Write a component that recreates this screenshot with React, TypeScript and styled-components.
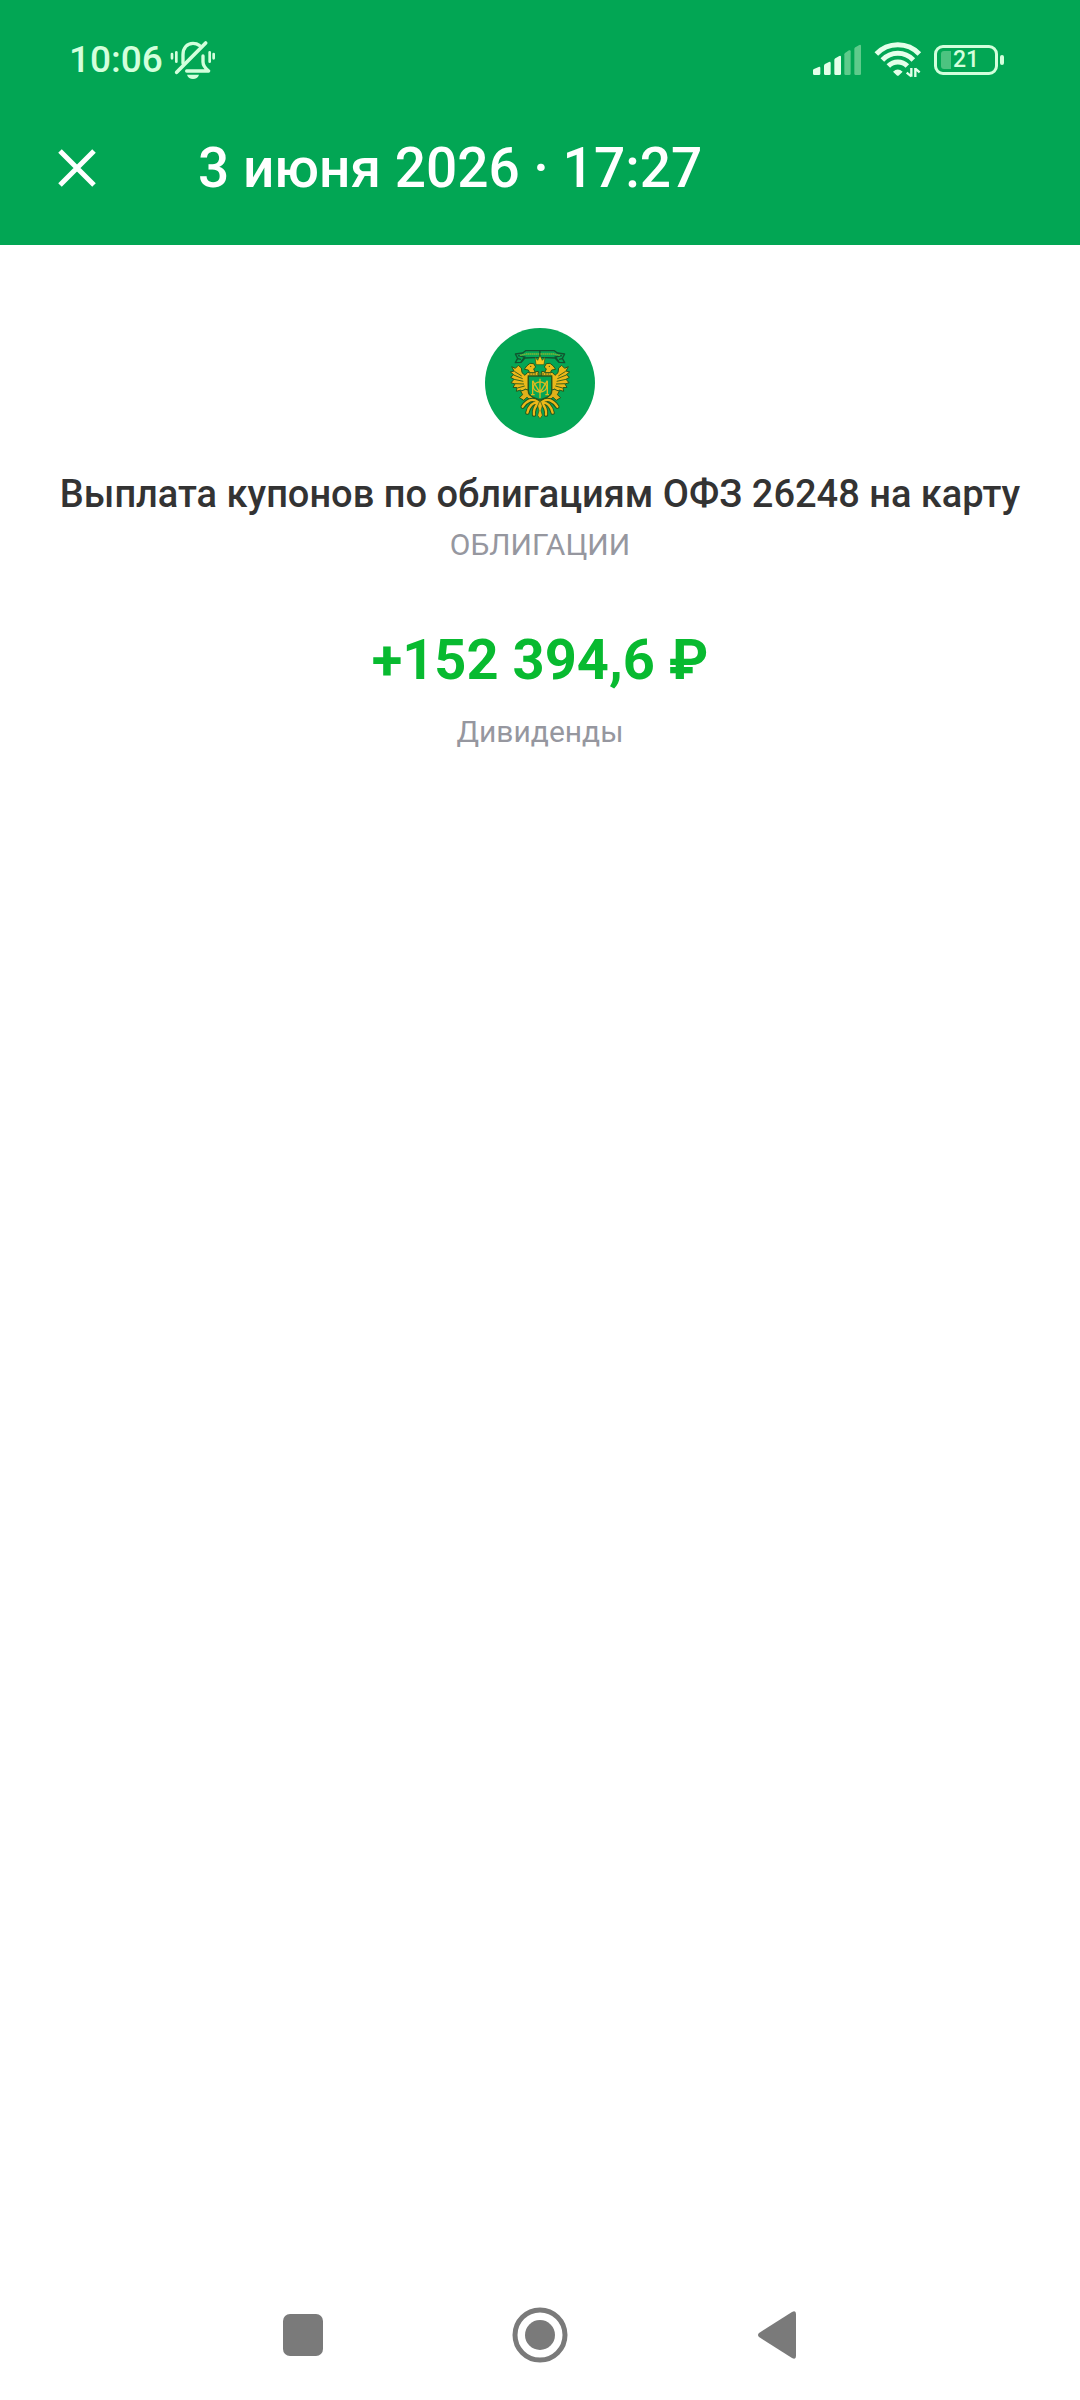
import styled, { createGlobalStyle } from "styled-components";

const BellOffIcon = () => (
  <svg width="46" height="40" viewBox="360 60 138 120" fill="none" aria-hidden="true">
    <g stroke="#d3ffdc" strokeWidth="10" strokeLinecap="round" strokeLinejoin="round">
      <path d="M399 130V104c0-20 12-34 30-34 8 0 14 2 19 6" />
      <path d="M459 108v18c0 12 6 18 17 27H410" />
      <path d="M380 157L467 69" strokeWidth="11" />
      <path d="M366 102v13M379 97v28M479 97v28M491 102v13" strokeWidth="8" />
    </g>
    <path d="M411 164h36c-3 9-9 13-18 13s-15-4-18-13z" fill="#d3ffdc" />
  </svg>
);

const SignalIcon = () => (
  <svg width="50" height="36" viewBox="66 66 150 108" aria-hidden="true">
    <g fill="#e4ffea">
      <path d="M69 151q0-3 3-4l14-6q5-2 5 3v17q0 4-4 4H73q-4 0-4-4z" />
      <path d="M102 137q0-3 3-5l12-6q5-2 5 3v32q0 4-4 4h-12q-4 0-4-4z" />
      <path d="M133 120q0-3 3-5l12-7q5-2 5 3v50q0 4-4 4h-12q-4 0-4-4z" />
    </g>
    <g fill="#5ecb8b">
      <path d="M163 103q0-3 3-5l11-7q5-2 5 3v67q0 4-4 4h-11q-4 0-4-4z" />
      <path d="M193 87q0-3 3-5l12-7q5-2 5 3v83q0 4-4 4h-12q-4 0-4-4z" />
    </g>
  </svg>
);

const WifiIcon = () => (
  <svg width="48" height="38" viewBox="249 63 144 114" fill="none" aria-hidden="true">
    <g stroke="#e4ffea" strokeWidth="15">
      <path d="M256 102C291 65 350 65 385 102" />
      <path d="M274 120C300 93 341 93 367 120" />
      <path d="M292 138C308 122 333 122 349 138" />
    </g>
    <path d="M306 155q14-13 29 0l-11 11q-3 3-7 0z" fill="#e4ffea" />
    <path
      d="M361 144v26M361 169l-14-11M373 171v-27M373 146l13 11"
      stroke="#e4ffea"
      strokeWidth="7"
    />
  </svg>
);

const CloseIcon = () => (
  <svg width="38" height="40" viewBox="0 0 38 40" aria-hidden="true">
    <path d="M2 3L36 37M36 3L2 37" stroke="#fff" strokeWidth="5" />
  </svg>
);

// One side of the coat of arms, the other side is its mirror
const EagleHalf = () => (
  <g>
    <path
      d="M190 160C178 163 165 161 157 164L150 172 141 164 139 150 130 142 121 151 110 146 117 159 106 162 116 170 107 178 117 184 108 194 120 198 114 208 126 209 124 220 137 216 144 224 151 213 160 218V176H190z"
      fill="#ecb81a"
      stroke="#26571c"
      strokeWidth="3"
    />
    <path
      d="M118 160L140 174M116 171L143 182M117 184L145 190M120 197L147 198M127 210L149 204"
      stroke="#3f6418"
      strokeWidth="3"
    />
    <path
      d="M164 164L160 156 148 154 155 144 165 136 176 137 182 147 176 153 181 164z"
      fill="#ecb81a"
      stroke="#26571c"
      strokeWidth="3"
    />
    <circle cx="167" cy="145" r="2" fill="#26571c" />
    <path
      d="M151 214L137 220 143 230 133 239 146 247 156 238 167 247 179 242 163 230 160 216z"
      fill="#e0b01a"
      stroke="#26571c"
      strokeWidth="3"
    />
    <path
      d="M189 252C172 239 156 247 143 266M187 254C174 252 162 264 157 284M191 254C181 264 175 275 177 290"
      fill="none"
      stroke="#26571c"
      strokeWidth="13"
      strokeLinecap="round"
    />
    <path
      d="M189 252C172 239 156 247 143 266M187 254C174 252 162 264 157 284M191 254C181 264 175 275 177 290"
      fill="none"
      stroke="#ecb81a"
      strokeWidth="7"
      strokeLinecap="round"
    />
    <path
      d="M121 108L143 105 152 98H195V118L150 120 138 133 121 134 128 121z"
      fill="#05a655"
      stroke="#12532f"
      strokeWidth="4"
      strokeLinejoin="round"
    />
    <path d="M129 113L149 117 138 132M128 122l10 2" fill="none" stroke="#12532f" strokeWidth="4" />
    <path d="M136 112L154 108H195" fill="none" stroke="#9fb52c" strokeWidth="4" strokeDasharray="4 2" />
  </g>
);

const Emblem = () => (
  <svg width="110" height="110" viewBox="30 30 330 330" role="img" aria-label="ОФЗ">
    <circle cx="195" cy="195" r="165" fill="#05a655" />
    <EagleHalf />
    <g transform="translate(390 0) scale(-1 1)">
      <EagleHalf />
    </g>
    <path
      d="M180 118L188 127 195 112 202 127 210 118 207 140H183z"
      fill="#f6c51b"
      stroke="#26571c"
      strokeWidth="2"
    />
    <path
      d="M160 174H230V219C230 234 214 239 195 246 176 239 160 234 160 219z"
      fill="#05a655"
      stroke="#26571c"
      strokeWidth="4"
    />
    <path d="M162 168h66" stroke="#7d7a18" strokeWidth="5" strokeDasharray="5 3" />
    <g fill="none" stroke="#d9bb1d" strokeWidth="4">
      <path d="M173 188V230M217 188V230M168 230h11M211 230h11M173 188L195 224 217 188M195 182V240" />
      <ellipse cx="195" cy="207" rx="20" ry="15" />
    </g>
    <path
      d="M195 246L188 264 192 278 188 292 195 302 202 292 198 278 202 264z"
      fill="#ecb81a"
      stroke="#26571c"
      strokeWidth="2"
    />
  </svg>
);

export default function App() {
  return (
    <Screen>
      <GlobalStyle />
      <Header>
        <StatusBar>
          <StatusGroup>
            <Clock>10:06</Clock>
            <BellOffIcon />
          </StatusGroup>
          <StatusGroup $gap={12}>
            <SignalIcon />
            <WifiIcon />
            <BatteryWrap>
              <Battery>
                <BatteryLevel />
                21
              </Battery>
              <BatteryCap />
            </BatteryWrap>
          </StatusGroup>
        </StatusBar>
        <AppBar>
          <CloseButton type="button" aria-label="Закрыть">
            <CloseIcon />
          </CloseButton>
          <Title>3 июня 2026 · 17:27</Title>
        </AppBar>
      </Header>
      <Details>
        <Emblem />
        <Name>Выплата купонов по облигациям ОФЗ 26248 на карту</Name>
        <Caption>ОБЛИГАЦИИ</Caption>
        <Amount>+152 394,6 ₽</Amount>
        <Caption>Дивиденды</Caption>
      </Details>
      <NavBar>
        <NavButton type="button" aria-label="Недавние">
          <svg width="40" height="42" viewBox="0 0 40 42">
            <rect width="40" height="42" rx="7" />
          </svg>
        </NavButton>
        <NavButton type="button" aria-label="Домой">
          <svg width="56" height="56" viewBox="0 0 56 56">
            <circle cx="28" cy="28" r="25" fill="none" stroke="#7a7a7a" strokeWidth="5" />
            <circle cx="28" cy="28" r="15" />
          </svg>
        </NavButton>
        <NavButton type="button" aria-label="Назад">
          <svg width="38" height="48" viewBox="0 0 38 48">
            <path d="M1 22L34 1q4-2 4 2v42q0 4-4 2L1 26q-2-2 0-4z" />
          </svg>
        </NavButton>
      </NavBar>
    </Screen>
  );
}

const GlobalStyle = createGlobalStyle`
  body {
    margin: 0;
    background-color: #fff;
    font-family: Roboto, "Noto Sans", sans-serif;
  }
  button {
    padding: 0;
    border: none;
    background-color: transparent;
    cursor: pointer;
  }
  svg {
    display: block;
    flex-shrink: 0;
  }
`;

const Screen = styled.div`
  display: flex;
  flex-direction: column;
  min-height: 100vh;
`;

const Header = styled.header`
  background-color: #02a654;
  color: #fff;
`;

const StatusBar = styled.div`
  display: flex;
  align-items: center;
  justify-content: space-between;
  padding: 40px 76px 12px 69px;
  height: 40px;
`;

const StatusGroup = styled.div<{ $gap?: number }>`
  display: flex;
  align-items: center;
  gap: ${({ $gap = 7 }) => $gap}px;
`;

const Clock = styled.span`
  font-size: 37px;
  font-weight: 500;
  line-height: 40px;
  color: #d3ffdc;
`;

const BatteryWrap = styled.div`
  display: flex;
  align-items: center;
  gap: 2px;
`;

const Battery = styled.div`
  box-sizing: border-box;
  display: flex;
  align-items: center;
  gap: 2px;
  width: 64px;
  height: 30px;
  padding-left: 4px;
  border: 3px solid #d3ffdc;
  border-radius: 9px;
  font-size: 23px;
  font-weight: 500;
  line-height: 24px;
  color: #d3ffdc;
`;

const BatteryLevel = styled.span`
  width: 10px;
  height: 18px;
  border-radius: 3px 0 0 3px;
  background-color: #4cc380;
`;

const BatteryCap = styled.span`
  width: 4px;
  height: 10px;
  border-radius: 2px;
  background-color: #d3ffdc;
`;

const AppBar = styled.div`
  display: flex;
  align-items: center;
  gap: 102px;
  height: 151px;
  padding: 0 58px 2px;
`;

const CloseButton = styled.button`
  flex-shrink: 0;
`;

const Title = styled.h1`
  margin: 0;
  font-size: 55px;
  font-weight: 500;
  line-height: 64px;
`;

const Details = styled.main`
  flex: 1;
  display: flex;
  flex-direction: column;
  align-items: center;
  padding: 83px 40px 0;
  text-align: center;
`;

const Name = styled.h2`
  margin: 31px 0 6px;
  font-size: 38px;
  font-weight: 500;
  line-height: 50px;
  color: #333;
`;

const Caption = styled.p`
  margin: 0;
  font-size: 30px;
  line-height: 40px;
  color: #96979f;
`;

const Amount = styled.p`
  margin: 63px 0 20px;
  font-size: 56px;
  font-weight: 700;
  line-height: 64px;
  color: #08ba30;
`;

const NavBar = styled.nav`
  display: flex;
  justify-content: center;
  height: 130px;
`;

const NavButton = styled.button`
  display: flex;
  align-items: center;
  justify-content: center;
  width: 22%;
  max-width: 237px;
  svg {
    fill: #7a7a7a;
  }
`;
